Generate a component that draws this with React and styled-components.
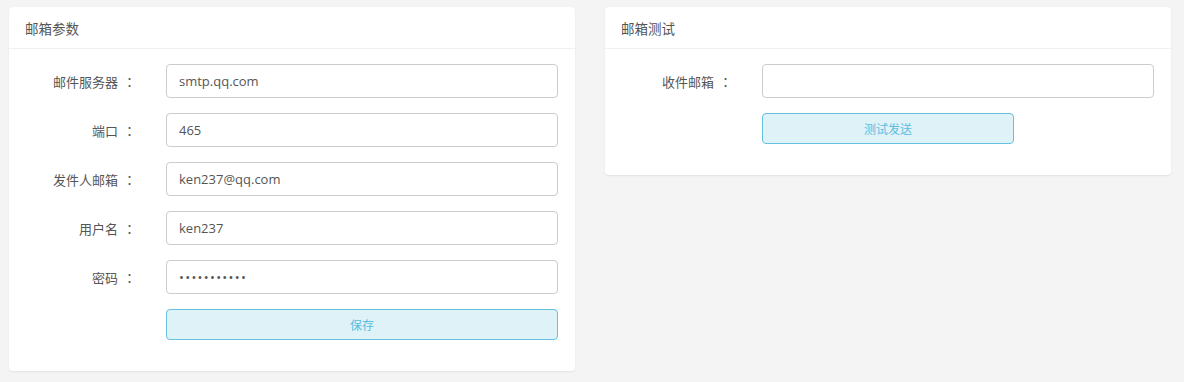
import React from "react";
import styled, { createGlobalStyle } from "styled-components";

const Global = createGlobalStyle`
  html, body { margin: 0; padding: 0; background: #f4f4f4; }
  body { font-family: "Open Sans", "Noto Sans CJK SC", sans-serif; }
  * { box-sizing: border-box; }
`;

const Page = styled.div`
  display: grid;
  grid-template-columns: 566px 566px;
  column-gap: 30px;
  align-items: start;
  padding: 7px 13px 0 9px;
  width: 1184px;
  height: 382px;
`;

const Card = styled.section`
  background: #fff;
  border-radius: 4px;
  box-shadow: 0 1px 2px rgba(0, 0, 0, 0.08);
`;

const CardHeader = styled.div`
  height: 42px;
  padding: 0 16px;
  display: flex;
  align-items: center;
  border-bottom: 1px solid #eef0f6;
  font-family: "Noto Sans CJK SC", sans-serif;
  font-size: 13.5px;
  color: #555;
`;

const CardBody = styled.div`
  display: flex;
  flex-direction: column;
  gap: 15px;
  padding: 15px 17px 31px 0;
`;

const Row = styled.div`
  display: flex;
  align-items: center;
`;

const Label = styled.label`
  width: 157px;
  flex: none;
  padding-right: 30px;
  text-align: right;
  font-family: "Noto Sans CJK SC", sans-serif;
  font-size: 13px;
  color: #555;
`;

const Colon = styled.span`
  font-family: "Noto Sans CJK TC", sans-serif;
  margin-left: 5px;
`;

const Input = styled.input`
  flex: 1;
  height: 34px;
  border: 1px solid #ccc;
  border-radius: 4px;
  padding: 0 12px;
  font-family: "Open Sans", "Noto Sans CJK SC", sans-serif;
  font-size: 13px;
  color: #555;
  background: #fff;
  outline: none;
  letter-spacing: ${(p) => (p.type === "password" ? "1.3px" : "0")};
`;

const Button = styled.button`
  height: 31px;
  width: ${(p) => (p.$w ? `${p.$w}px` : "auto")};
  flex: ${(p) => (p.$w ? "none" : "1")};
  background: #dff2f8;
  border: 1px solid #66c0e0;
  border-radius: 4px;
  color: #5bbde0;
  font-family: "Noto Sans CJK SC", sans-serif;
  font-size: 12px;
  cursor: pointer;
`;

const Spacer = styled.div`
  width: 157px;
  flex: none;
`;

const fields = [
  { label: "邮件服务器", value: "smtp.qq.com" },
  { label: "端口", value: "465" },
  { label: "发件人邮箱", value: "ken237@qq.com" },
  { label: "用户名", value: "ken237" },
  { label: "密码", value: "ken237pass1", type: "password" },
];

export default function App() {
  return (
    <>
      <Global />
      <Page>
        <Card>
          <CardHeader>邮箱参数</CardHeader>
          <CardBody>
            {fields.map((f) => (
              <Row key={f.label}>
                <Label>
                  {f.label}
                  <Colon>：</Colon>
                </Label>
                <Input type={f.type || "text"} defaultValue={f.value} />
              </Row>
            ))}
            <Row>
              <Spacer />
              <Button>保存</Button>
            </Row>
          </CardBody>
        </Card>
        <Card>
          <CardHeader>邮箱测试</CardHeader>
          <CardBody>
            <Row>
              <Label>
                收件邮箱<Colon>：</Colon>
              </Label>
              <Input type="text" defaultValue="" />
            </Row>
            <Row>
              <Spacer />
              <Button $w={252}>测试发送</Button>
            </Row>
          </CardBody>
        </Card>
      </Page>
    </>
  );
}
